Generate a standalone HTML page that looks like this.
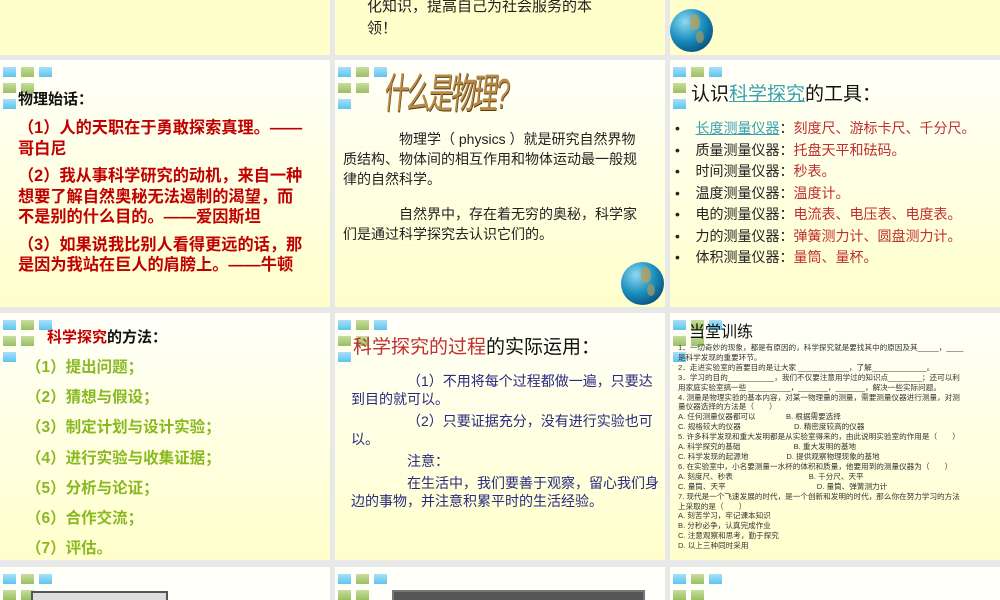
<!DOCTYPE html><html><head><meta charset="utf-8"><style>
*{margin:0;padding:0;box-sizing:border-box}
body{width:1000px;height:600px;overflow:hidden;background:#e8e8e8;font-family:"Liberation Sans","Noto Sans CJK SC",sans-serif;position:relative}
.p{position:absolute;background:linear-gradient(#fffff9,#ffffcc);overflow:hidden}
.sq{position:absolute;width:13px;height:10px}
.b{background:linear-gradient(#a8e0f8,#5cc4f0)}
.g{background:linear-gradient(#c8dca0,#98c060)}
.t{position:absolute;white-space:nowrap}
.globe{position:absolute;width:43px;height:43px;border-radius:50%;background:radial-gradient(circle at 35% 30%,#8fd8f0,#1a90c0 45%,#0a5080 80%,#033050);overflow:hidden}
.globe:before{content:"";position:absolute;left:20px;top:5px;width:10px;height:16px;border-radius:40% 60% 50% 40%;background:rgba(190,160,80,.7)}
.globe:after{content:"";position:absolute;left:26px;top:22px;width:8px;height:12px;border-radius:50%;background:rgba(190,160,80,.6)}
</style></head><body>

<!-- row 1 -->
<div class="p" style="left:0;top:0;width:330px;height:55px;background:#ffffcc"></div>
<div class="p" style="left:335px;top:0;width:330px;height:55px;background:#ffffcc">
<div class="t" style="left:32px;top:-4px;font-size:15px;color:#222;line-height:22px">化知识，提高自己为社会服务的本<br>领！</div></div>
<div class="p" style="left:670px;top:0;width:330px;height:55px;background:#ffffcc"><div class="globe" style="left:0;top:9px"></div></div>

<!-- row 2 -->
<div class="p" style="left:0;top:60px;width:330px;height:247px">
<div class="sq b" style="left:3px;top:7px"></div><div class="sq g" style="left:21px;top:7px"></div><div class="sq b" style="left:39px;top:7px"></div>
<div class="sq g" style="left:3px;top:23px"></div><div class="sq g" style="left:21px;top:23px"></div><div class="sq b" style="left:3px;top:39px"></div>
<div class="t" style="left:18px;top:28px;font-size:15px;font-weight:bold;color:#111">物理始话：</div>
<div style="position:absolute;left:18px;top:58px;width:290px;font-size:16.2px;font-weight:bold;color:#c00000;line-height:20.5px">
<p style="margin-bottom:7px">（1）人的天职在于勇敢探索真理。——哥白尼</p>
<p style="margin-bottom:7px">（2）我从事科学研究的动机，来自一种想要了解自然奥秘无法遏制的渴望，而不是别的什么目的。——爱因斯坦</p>
<p>（3）如果说我比别人看得更远的话，那是因为我站在巨人的肩膀上。——牛顿</p></div></div>

<div class="p" style="left:335px;top:60px;width:330px;height:247px">
<div class="sq b" style="left:3px;top:7px"></div><div class="sq g" style="left:21px;top:7px"></div><div class="sq b" style="left:39px;top:7px"></div>
<div class="sq g" style="left:3px;top:23px"></div><div class="sq g" style="left:21px;top:23px"></div><div class="sq b" style="left:3px;top:39px"></div>
<div class="t" style="left:52px;top:8px;font-size:40px;line-height:50px;color:#b88a48;letter-spacing:-4px;transform:scale(.62,1.05) skewX(-10deg);transform-origin:left top;text-shadow:1px 1px 0 #5a3a10">什么是物理?</div>
<div style="position:absolute;left:8px;top:69px;width:300px;font-size:14px;color:#222;line-height:20px">
<p style="text-indent:56px">物理学（ physics ）就是研究自然界物质结构、物体间的相互作用和物体运动最一般规律的自然科学。</p>
<p style="text-indent:56px;margin-top:15px">自然界中，存在着无穷的奥秘，科学家们是通过科学探究去认识它们的。</p></div>
<div class="globe" style="left:286px;top:202px"></div></div>

<div class="p" style="left:670px;top:60px;width:330px;height:247px">
<div class="sq b" style="left:3px;top:7px"></div><div class="sq g" style="left:21px;top:7px"></div><div class="sq b" style="left:39px;top:7px"></div>
<div class="sq g" style="left:3px;top:23px"></div><div class="sq b" style="left:3px;top:39px"></div>
<div class="t" style="left:21px;top:19px;font-size:19px;color:#111">认识<span style="color:#3aa0b0;text-decoration:underline">科学探究</span>的工具：</div>
<div style="position:absolute;left:5px;top:58px;font-size:14px;line-height:21.5px;color:#222;white-space:nowrap">
<div>•&nbsp;&nbsp;&nbsp;&nbsp;<span style="color:#3aa0b0;text-decoration:underline">长度测量仪器</span>：<span style="color:#c03030">刻度尺、游标卡尺、千分尺。</span></div>
<div>•&nbsp;&nbsp;&nbsp;&nbsp;质量测量仪器：<span style="color:#c03030">托盘天平和砝码。</span></div>
<div>•&nbsp;&nbsp;&nbsp;&nbsp;时间测量仪器：<span style="color:#c03030">秒表。</span></div>
<div>•&nbsp;&nbsp;&nbsp;&nbsp;温度测量仪器：<span style="color:#c03030">温度计。</span></div>
<div>•&nbsp;&nbsp;&nbsp;&nbsp;电的测量仪器：<span style="color:#c03030">电流表、电压表、电度表。</span></div>
<div>•&nbsp;&nbsp;&nbsp;&nbsp;力的测量仪器：<span style="color:#c03030">弹簧测力计、圆盘测力计。</span></div>
<div>•&nbsp;&nbsp;&nbsp;&nbsp;体积测量仪器：<span style="color:#c03030">量筒、量杯。</span></div></div></div>

<!-- row 3 -->
<div class="p" style="left:0;top:313px;width:330px;height:247px">
<div class="sq b" style="left:3px;top:7px"></div><div class="sq g" style="left:21px;top:7px"></div><div class="sq b" style="left:39px;top:7px"></div>
<div class="sq g" style="left:3px;top:23px"></div><div class="sq g" style="left:21px;top:23px"></div><div class="sq b" style="left:3px;top:39px"></div>
<div class="t" style="left:47px;top:13px;font-size:15px;font-weight:bold;color:#111"><span style="color:#c00000">科学探究</span>的方法：</div>
<div style="position:absolute;left:26px;top:40px;font-size:15.5px;font-weight:bold;color:#8ab820;line-height:30.2px;white-space:nowrap">
<div>（1）提出问题；</div><div>（2）猜想与假设；</div><div>（3）制定计划与设计实验；</div><div>（4）进行实验与收集证据；</div><div>（5）分析与论证；</div><div>（6）合作交流；</div><div>（7）评估。</div></div></div>

<div class="p" style="left:335px;top:313px;width:330px;height:247px">
<div class="sq b" style="left:3px;top:7px"></div><div class="sq g" style="left:21px;top:7px"></div><div class="sq b" style="left:39px;top:7px"></div>
<div class="sq g" style="left:3px;top:23px"></div><div class="sq g" style="left:21px;top:23px"></div><div class="sq b" style="left:3px;top:39px"></div>
<div class="t" style="left:18px;top:19px;font-size:19px;color:#111"><span style="color:#c03030">科学探究的过程</span>的实际运用：</div>
<div style="position:absolute;left:16px;top:59px;width:310px;font-size:14px;color:#2a2a80;line-height:18px">
<p style="text-indent:56px">（1）不用将每个过程都做一遍，只要达到目的就可以。</p>
<p style="text-indent:56px;margin-top:4px">（2）只要证据充分，没有进行实验也可以。</p>
<p style="text-indent:56px;margin-top:4px">注意：</p>
<p style="text-indent:56px;margin-top:4px">在生活中，我们要善于观察，留心我们身边的事物，并注意积累平时的生活经验。</p></div></div>

<div class="p" style="left:670px;top:313px;width:330px;height:247px">
<div class="sq b" style="left:3px;top:7px"></div><div class="sq g" style="left:21px;top:7px"></div><div class="sq b" style="left:39px;top:7px"></div>
<div class="sq g" style="left:3px;top:23px"></div><div class="sq g" style="left:21px;top:23px"></div><div class="sq b" style="left:3px;top:39px"></div>
<div class="t" style="left:19px;top:5px;font-size:16px;color:#111">当堂训练</div>
<div style="position:absolute;left:8px;top:30px;font-size:7.6px;line-height:9.9px;color:#333;white-space:nowrap">
<div>1．一切奇妙的现象，都是有原因的，科学探究就是要找其中的原因及其_____，____</div>
<div>是科学发现的重要环节。</div>
<div>2．走进实验室的首要目的是让大家 ____________，了解_____________。</div>
<div>3．学习的目的___________，我们不仅要注意用学过的知识点________；还可以利</div>
<div>用家庭实验室搞一些 __________，_______，_______，解决一些实际问题。</div>
<div>4. 测量是物理实验的基本内容，对某一物理量的测量，需要测量仪器进行测量，对测</div>
<div>量仪器选择的方法是（　　）</div>
<div>A. 任何测量仪器都可以　　　　B. 根据需要选择</div>
<div>C. 规格较大的仪器　　　　　　　D. 精密度较高的仪器</div>
<div>5. 许多科学发现和重大发明都是从实验室得来的，由此说明实验室的作用是（　　）</div>
<div>A. 科学探究的基础　　　　　　　B. 重大发明的基地</div>
<div>C. 科学发现的起源地　　　　　D. 提供观察物理现象的基地</div>
<div>6. 在实验室中，小名要测量一水杯的体积和质量，他要用到的测量仪器为（　　）</div>
<div>A. 刻度尺、秒表　　　　　　　　　　B. 千分尺、天平</div>
<div>C. 量筒、天平　　　　　　　　　　　　D. 量筒、弹簧测力计</div>
<div>7. 现代是一个飞速发展的时代，是一个创新和发明的时代，那么你在努力学习的方法</div>
<div>上采取的是（　　）</div>
<div>A. 刻苦学习，牢记课本知识</div>
<div>B. 分秒必争，认真完成作业</div>
<div>C. 注意观察和思考，勤于探究</div>
<div>D. 以上三种同时采用</div></div></div>

<!-- row 4 -->
<div class="p" style="left:0;top:567px;width:330px;height:33px;background:#fffffa">
<div class="sq b" style="left:3px;top:7px"></div><div class="sq g" style="left:21px;top:7px"></div><div class="sq b" style="left:39px;top:7px"></div>
<div class="sq g" style="left:3px;top:23px"></div><div class="sq g" style="left:21px;top:23px"></div>
<div style="position:absolute;left:31px;top:24px;width:137px;height:12px;border:2px solid #555;background:#ddd"></div></div>
<div class="p" style="left:335px;top:567px;width:330px;height:33px;background:#fffffa">
<div class="sq b" style="left:3px;top:7px"></div><div class="sq g" style="left:21px;top:7px"></div><div class="sq b" style="left:39px;top:7px"></div>
<div class="sq g" style="left:3px;top:23px"></div><div class="sq g" style="left:21px;top:23px"></div>
<div style="position:absolute;left:57px;top:23px;width:253px;height:14px;background:#555;border:2px solid #777"></div></div>
<div class="p" style="left:670px;top:567px;width:330px;height:33px;background:#fffffa">
<div class="sq b" style="left:3px;top:7px"></div><div class="sq g" style="left:21px;top:7px"></div><div class="sq b" style="left:39px;top:7px"></div>
<div class="sq g" style="left:3px;top:23px"></div><div class="sq g" style="left:21px;top:23px"></div></div>
</body></html>
